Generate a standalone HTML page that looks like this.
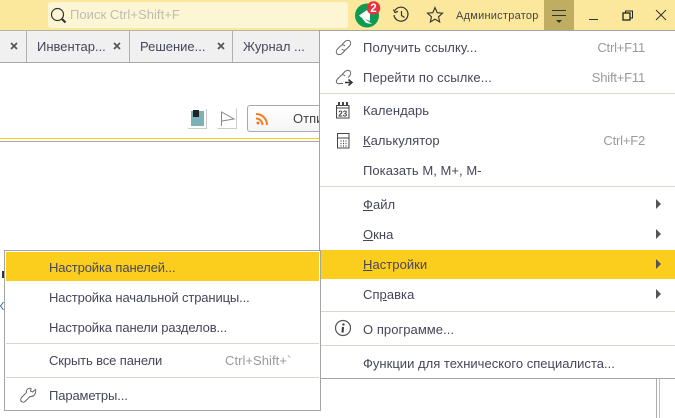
<!DOCTYPE html>
<html><head><meta charset="utf-8">
<style>
html,body{margin:0;padding:0;background:#fff}
#p{position:relative;width:675px;height:418px;overflow:hidden;background:#fff;font:13px/14px "Liberation Sans",sans-serif;color:#46465a;letter-spacing:.05px}
#p div,#p svg{position:absolute}
.t{white-space:nowrap}
.m{margin-top:1px}
.b{letter-spacing:-.12px}
.g{color:#9a9a9a}
.k{letter-spacing:-.2px}
.s{height:1px;background:#d9d6cc}
u{text-underline-offset:1px}
.ar{width:0;height:0;border-left:5px solid #555;border-top:5px solid transparent;border-bottom:5px solid transparent}
</style></head><body><div id="p">
<div style="left:0;top:0;width:675px;height:30px;background:#fbe89d"></div>
<div style="left:0;top:30px;width:675px;height:1px;background:#b5b5a5"></div>
<div style="left:48px;top:2px;width:300px;height:26px;background:#fdf6d5;border-radius:3px"></div>
<svg style="left:50px;top:7px" width="18" height="18" viewBox="0 0 18 18" fill="none" stroke="#333"><circle cx="7.500" cy="7.500" r="6" stroke-width="1.200"/><path d="M12 12L15.500 15.500" stroke-width="2.200"/></svg>
<div class="t" style="left:70px;top:8px;color:#bdbcb0">Поиск Ctrl+Shift+F</div>
<svg style="left:354px;top:1px" width="30" height="28" viewBox="0 0 30 28"><circle cx="13" cy="14.500" r="12" fill="#0e9a53"/><path d="M5 14.500L16 7V20L11 18L18 23L12 22L8 17Z" fill="#fff"/><circle cx="19.500" cy="7" r="6.800" fill="#e8323c"/><text x="19.500" y="11" font-family="Liberation Sans" font-weight="bold" font-size="11.500" fill="#fff" text-anchor="middle">2</text></svg>
<svg style="left:392px;top:6px" width="18" height="18" viewBox="0 0 18 18" fill="none" stroke="#333" stroke-width="1.200"><path d="M3 4.500A7 7 0 1 1 2 9"/><path d="M1.500 3.500L3 6.500L6 5.500" /><path d="M9.500 5V9.500L12.500 11.500"/></svg>
<svg style="left:426px;top:6px" width="18" height="18" viewBox="0 0 18 18" fill="none" stroke="#333" stroke-width="1.100"><path d="M9 1.500L11.200 6.700L16.500 7.200L12.500 10.800L13.700 16L9 13.200L4.300 16L5.500 10.800L1.500 7.200L6.800 6.700Z"/></svg>
<div class="t" style="left:456px;top:9px;font-size:11px;letter-spacing:.25px;color:#444">Администратор</div>
<div style="left:544px;top:0;width:30px;height:30px;background:#bfae62"></div>
<div style="left:552px;top:10px;width:14px;height:1px;background:#333"></div>
<div style="left:552px;top:15px;width:14px;height:1px;background:#333"></div>
<div style="left:556px;top:20px;width:0;height:0;border-top:3px solid #333;border-left:3px solid transparent;border-right:3px solid transparent"></div>
<div style="left:589px;top:19px;width:9px;height:1px;background:#333"></div>
<svg style="left:622px;top:10px" width="12" height="12" viewBox="0 0 12 12" fill="none" stroke="#222" stroke-width="1"><rect x="1" y="3" width="7" height="7" stroke-width="1.300"/><path d="M3.500 2.500V1H10.500V8H8.500"/></svg>
<svg style="left:655px;top:9px" width="12" height="12" viewBox="0 0 12 12" fill="none" stroke="#333" stroke-width="1"><path d="M1 1L11 11M11 1L1 11"/></svg>

<div style="left:0;top:31px;width:320px;height:31px;background:#f0f0f0"></div>
<div style="left:0;top:62px;width:320px;height:1px;background:#a8a8a8"></div>
<div style="left:26px;top:31px;width:1px;height:31px;background:#b0b0b0"></div>
<div style="left:129px;top:31px;width:1px;height:31px;background:#b0b0b0"></div>
<div style="left:232px;top:31px;width:1px;height:31px;background:#b0b0b0"></div>
<svg style="left:10px;top:42px" width="140" height="10" viewBox="0 0 140 10" fill="none" stroke="#555" stroke-width="1.700"><path d="M1 1L7 7M7 1L1 7M104 1L110 7M110 1L104 7"/></svg>
<svg style="left:217px;top:42px" width="10" height="10" viewBox="0 0 10 10" fill="none" stroke="#555" stroke-width="1.700"><path d="M1 1L7 7M7 1L1 7"/></svg>
<div class="t" style="left:37px;top:40px;letter-spacing:0">Инвентар...</div>
<div class="t" style="left:140px;top:40px;letter-spacing:0">Решение...</div>
<div class="t" style="left:243px;top:40px;letter-spacing:0">Журнал ...</div>

<div style="left:188px;top:109px;width:18px;height:19px;background:#fff;border-right:1px solid #ccc;border-bottom:1px solid #ccc"></div>
<div style="left:191px;top:111px;width:13px;height:15px;background:#7ab2b8"></div>
<div style="left:193px;top:110px;width:6px;height:7px;background:#222"></div>
<svg style="left:217px;top:108px" width="20" height="21" viewBox="0 0 20 21" fill="none"><path d="M.5 20.500H19.500V.5" stroke="#ccc"/><path d="M4.500 18V4L17 11L5 13" stroke="#888"/></svg>
<div style="left:247px;top:105px;width:80px;height:25px;border:1px solid #aaa;border-radius:3px;background:linear-gradient(#fff,#f5f5f5)"></div>
<svg style="left:256px;top:113px" width="12" height="12" viewBox="0 0 12 12" fill="none" stroke="#f47a20" stroke-width="2"><circle cx="2" cy="10" r="1.500" fill="#f47a20" stroke="none"/><path d="M0 5.500A6.500 6.500 0 0 1 6.500 12M0 1A11 11 0 0 1 11 12"/></svg>
<div class="t" style="left:293px;top:112px;color:#444;letter-spacing:0">Отпи</div>
<div style="left:0;top:138px;width:320px;height:1px;background:#fbcf1f"></div>
<div style="left:0;top:141px;width:320px;height:1px;background:#aaa"></div>
<div style="left:2px;top:271px;width:2px;height:7px;background:#333"></div>
<svg style="left:0;top:301px" width="4" height="10" viewBox="0 0 4 10" fill="none" stroke="#3060c0"><path d="M3.500 1L.5 5L3.500 9"/></svg>
<div style="left:656px;top:378px;width:1px;height:40px;background:#aaa"></div>
<div style="left:659px;top:378px;width:1px;height:40px;background:#f0c030"></div>

<div style="left:319px;top:30px;width:356px;height:347px;background:#fff;border-left:1px solid #a5a5a5;border-bottom:1px solid #a5a5a5;border-top:1px solid #a5a5a5"></div>
<svg style="left:335px;top:39px" width="17" height="17" viewBox="0 0 17 17" fill="none" stroke="#666" stroke-width="1"><path d="M7 5.500L10 2.500C11.500 1 14 1 15 2.200C16 3.500 16 5.500 14.500 7L11.500 10C10 11.500 8 11.500 6.800 10"/><path d="M10 11.500L7 14.500C5.500 16 3 16 2 14.800C1 13.500 1 11.500 2.500 10L5.500 7C7 5.500 9 5.500 10.200 7"/></svg>
<svg style="left:335px;top:69px" width="18" height="17" viewBox="0 0 18 17" fill="none" stroke="#666" stroke-width="1"><path d="M7 5.500L10 2.500C11.500 1 14 1 15 2.200C16 3.500 16 5.500 14.500 7L13 8.500"/><path d="M8 14.500H5C2 15.500 0 13 2.500 10L6 6.500C7 5.500 9 5.500 10.200 7"/><path d="M10 13.500H16M13.500 10.500L17 13.500L13.500 16.500" stroke="#333" stroke-width="1.500"/></svg>
<div class="t m" style="left:363px;top:40px;letter-spacing:.1px">Получить ссылку...</div>
<div class="t g k m" style="right:30px;top:40px">Ctrl+F11</div>
<div class="t m" style="left:363px;top:70px;letter-spacing:.1px">Перейти по ссылке...</div>
<div class="t g k m" style="right:30px;top:70px">Shift+F11</div>
<div class="s" style="left:320px;top:93px;width:355px"></div>
<svg style="left:336px;top:102px" width="14" height="17" viewBox="0 0 14 17" fill="none" stroke="#444"><rect x=".5" y="3.500" width="12.500" height="12.500"/><path d="M3 0V4M7 0V4M11 0V4" stroke-width="2"/><path d="M.5 6H13"/><text x="6.800" y="14.500" font-family="Liberation Sans" font-size="8" font-weight="bold" fill="#444" stroke="none" text-anchor="middle">23</text></svg>
<svg style="left:337px;top:133px" width="13" height="16" viewBox="0 0 13 16" fill="none" stroke="#444"><rect x=".5" y=".5" width="11.500" height="14.500"/><path d="M.5 5H12"/><path d="M3.500 8H4.500M6 8H7M8.500 8H9.500M3.500 10.500H4.500M6 10.500H7M8.500 10.500H9.500M3.500 13H4.500M6 13H7M8.500 13H9.500" stroke-width="1.200"/></svg>
<div class="t m" style="left:363px;top:103px">Кален<u>д</u>арь</div>
<div class="t m" style="left:363px;top:133px"><u>К</u>алькулятор</div>
<div class="t g k m" style="right:30px;top:133px">Ctrl+F2</div>
<div class="t m" style="left:363px;top:163px">Показать M, M+, M-</div>
<div class="s" style="left:320px;top:186px;width:355px"></div>
<div class="t m" style="left:363px;top:197px"><u>Ф</u>айл</div>
<div class="ar" style="left:656px;top:199px"></div>
<div class="t m" style="left:363px;top:227px"><u>О</u>кна</div>
<div class="ar" style="left:656px;top:229px"></div>
<div style="left:320px;top:250px;width:355px;height:29px;background:#fbce1e"></div>
<div class="t m" style="left:363px;top:257px"><u>Н</u>астройки</div>
<div class="ar" style="left:656px;top:259px"></div>
<div class="t m" style="left:363px;top:287px">Сп<u>р</u>авка</div>
<div class="ar" style="left:656px;top:289px"></div>
<div class="s" style="left:320px;top:311px;width:355px"></div>
<svg style="left:334px;top:319px" width="18" height="18" viewBox="0 0 18 18" fill="none"><circle cx="9" cy="9" r="7.500" stroke="#555" stroke-width="1.200"/><path d="M9.500 4.500V6.500M9 8L8.500 13.500" stroke="#333" stroke-width="2"/></svg>
<div class="t m" style="left:363px;top:322px">О программе...</div>
<div class="s" style="left:320px;top:345px;width:355px"></div>
<div class="t m" style="left:363px;top:356px;letter-spacing:.02px">Функции для технического специалиста...</div>

<div style="left:4px;top:250px;width:315px;height:159px;background:#fff;border:1px solid #a5a5a5"></div>
<div style="left:6px;top:252px;width:313px;height:29px;background:#fbce1e"></div>
<div class="t m b" style="left:49px;top:260px">Настройка панелей...</div>
<div class="t m b" style="left:49px;top:290px">Настройка начальной страницы...</div>
<div class="t m b" style="left:49px;top:320px">Настройка панели разделов...</div>
<div class="s" style="left:6px;top:343px;width:313px"></div>
<div class="t m b" style="left:49px;top:353px">Скрыть все панели</div>
<div class="t g m" style="left:225px;top:353px">Ctrl+Shift+`</div>
<div class="s" style="left:6px;top:377px;width:313px"></div>
<svg style="left:20px;top:387px" width="17" height="16" viewBox="0 0 17 16" fill="none" stroke="#666" stroke-width="1"><path d="M15.500 2.500L12.500 5L10.500 4L11 1.500C8.500 .5 6 2.500 6.500 5.500L1.500 10.500C.5 12 .5 13.500 1.500 14.500C2.500 15.500 4 15.500 5 14.500L10 9.500C13.500 10 16.500 7 15.500 2.500Z"/></svg>
<div class="t m b" style="left:49px;top:388px">Параметры...</div>
</div></body></html>
